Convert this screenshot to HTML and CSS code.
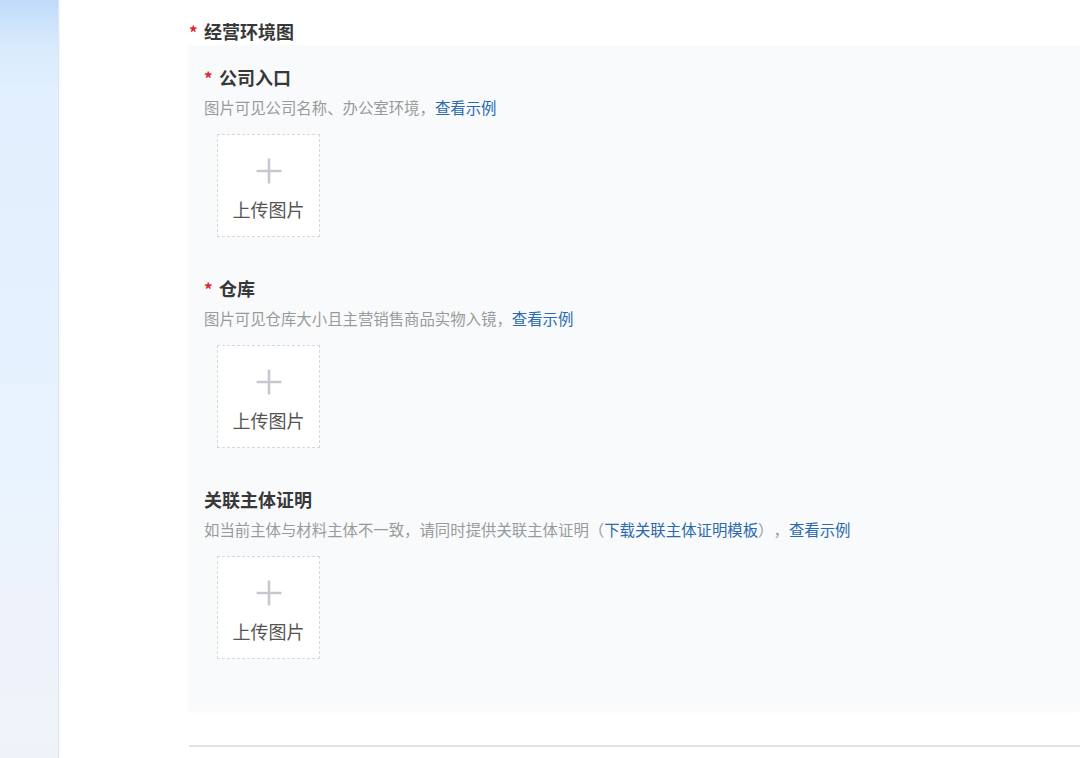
FILE: index.html
```html
<!DOCTYPE html>
<html lang="zh-CN">
<head>
<meta charset="utf-8">
<title>经营环境图</title>
<link rel="stylesheet" href="styles.css">
</head>
<body>
<div class="layout">
  <aside class="sidebar"></aside>
  <main class="main">
    <h2 class="group-title"><span class="req">*</span>经营环境图</h2>
    <div class="panel">
      <section class="field">
        <h3 class="field-title"><span class="req">*</span>公司入口</h3>
        <p class="field-desc">图片可见公司名称、办公室环境，<a class="link">查看示例</a></p>
        <div class="upload">
          <svg class="plus" width="28" height="28" viewBox="0 0 28 28"><path d="M14 1.5v25M1.5 14h25" stroke="#c5c9cf" stroke-width="2.6" fill="none"/></svg>
          <span class="upload-text">上传图片</span>
        </div>
      </section>
      <section class="field">
        <h3 class="field-title"><span class="req">*</span>仓库</h3>
        <p class="field-desc">图片可见仓库大小且主营销售商品实物入镜，<a class="link">查看示例</a></p>
        <div class="upload">
          <svg class="plus" width="28" height="28" viewBox="0 0 28 28"><path d="M14 1.5v25M1.5 14h25" stroke="#c5c9cf" stroke-width="2.6" fill="none"/></svg>
          <span class="upload-text">上传图片</span>
        </div>
      </section>
      <section class="field">
        <h3 class="field-title">关联主体证明</h3>
        <p class="field-desc">如当前主体与材料主体不一致，请同时提供关联主体证明（<a class="link">下载关联主体证明模板</a>），<a class="link">查看示例</a></p>
        <div class="upload">
          <svg class="plus" width="28" height="28" viewBox="0 0 28 28"><path d="M14 1.5v25M1.5 14h25" stroke="#c5c9cf" stroke-width="2.6" fill="none"/></svg>
          <span class="upload-text">上传图片</span>
        </div>
      </section>
    </div>
    <div class="divider"></div>
  </main>
</div>
</body>
</html>
```

FILE: styles.css
```css
* { box-sizing: border-box; }
html, body {
  margin: 0;
  padding: 0;
  height: 100%;
  overflow: hidden;
  background: #ffffff;
  font-family: "Noto Sans CJK SC", "Noto Sans", sans-serif;
}
.layout {
  display: flex;
  height: 758px;
}
.sidebar {
  width: 59px;
  flex: 0 0 59px;
  background: linear-gradient(180deg, #bfdbfa 0px, #d6e9fc 40px, #e1effe 90px, #e4f1fe 300px, #e9f3fe 480px, #edf2fb 600px, #eff3f9 758px);
  border-right: 1px solid #dfe4ea;
  box-shadow: 1px 0 3px rgba(0, 0, 0, 0.04);
}
.main {
  flex: 1;
  padding: 18px 0 0 130px;
  min-width: 0;
}
.group-title {
  margin: 0;
  height: 27px;
  line-height: 26px;
  font-size: 18px;
  font-weight: 700;
  color: #383838;
}
.req {
  display: inline-block;
  width: 15px;
  color: #e0242b;
  font-size: 17px;
  font-weight: 700;
}
.panel {
  background: #f8fafc;
  padding: 20px 0 52px 15px;
  box-shadow: -1px 1px 3px rgba(0, 0, 0, 0.025);
}
.field + .field {
  margin-top: 39px;
}
.field-title {
  margin: 0;
  height: 24px;
  line-height: 24px;
  font-size: 18px;
  font-weight: 700;
  color: #383838;
}
.field-desc {
  margin: 7px 0 0;
  height: 22px;
  line-height: 22px;
  font-size: 15.4px;
  color: #9a9a9a;
  white-space: nowrap;
  text-spacing-trim: space-all;
}
.link {
  color: #2b69b0;
  text-decoration: none;
}
.upload {
  margin: 16px 0 0 13px;
  width: 103px;
  height: 103px;
  border: 1px dashed #d6d8dc;
  background: #ffffff;
  display: flex;
  flex-direction: column;
  align-items: center;
  padding-top: 22px;
  gap: 12px;
}
.plus { display: block; }
.upload-text {
  font-size: 18px;
  line-height: 24px;
  color: #555555;
}
.divider {
  margin-top: 34px;
  height: 2px;
  background: #e2e3e5;
}
```
